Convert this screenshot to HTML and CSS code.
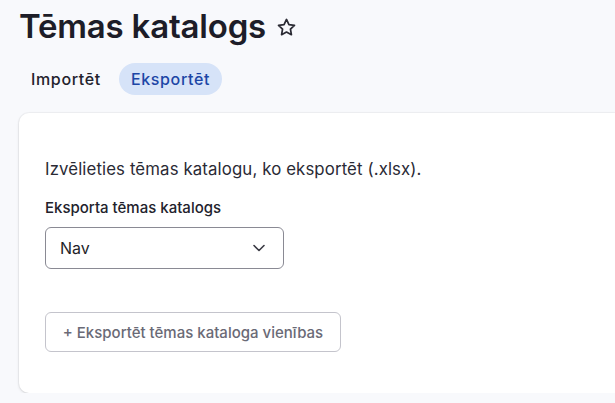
FILE: index.html
```html
<!DOCTYPE html>
<html lang="lv">
<head>
<meta charset="utf-8">
<link rel="stylesheet" href="styles.css">
</head>
<body>
<div class="page">
  <header class="head">
    <h1 class="title">Tēmas katalogs</h1>
    <svg class="star" width="21" height="21" viewBox="0 0 24 24" fill="none" stroke="#2a2a33" stroke-width="2" stroke-linejoin="round"><path d="M12 2.8l2.8 5.8 6.3.9-4.6 4.4 1.1 6.3L12 17.2l-5.6 3 1.1-6.3-4.6-4.4 6.3-.9z"/></svg>
  </header>
  <nav class="tabs">
    <span class="tab">Importēt</span>
    <span class="tab active">Eksportēt</span>
  </nav>
  <section class="card">
    <p class="intro">Izvēlieties tēmas katalogu, ko eksportēt (.xlsx).</p>
    <label class="label">Eksporta tēmas katalogs</label>
    <div class="select">
      <span>Nav</span>
      <svg width="16" height="16" viewBox="0 0 16 16" fill="none" stroke="#3a3a44" stroke-width="1.6" stroke-linecap="round" stroke-linejoin="round"><path d="M3 5.5l5 5 5-5"/></svg>
    </div>
    <button class="btn">+ Eksportēt tēmas kataloga vienības</button>
  </section>
</div>
</body>
</html>
```

FILE: styles.css
```css
html, body {
  margin: 0;
  background: #f8f9fc;
  font-family: Inter, "Noto Sans", sans-serif;
  color: #1f1f2a;
}
.page {
  padding: 6px 0 0 19px;
}
.head {
  display: flex;
  align-items: center;
  gap: 10px;
}
.title {
  margin: 0;
  font-size: 33px;
  font-weight: 600;
  letter-spacing: -0.2px;
  line-height: 40px;
  color: #1d1d28;
}
.star {
  margin-top: 2px;
}
.tabs {
  display: flex;
  gap: 6px;
  margin-top: 17px;
}
.tab {
  font-size: 16px;
  font-weight: 500;
  letter-spacing: 0.65px;
  line-height: 32px;
  padding: 0 12px;
  border-radius: 16px;
  color: #22222c;
}
.active {
  background: #d6e3f8;
  color: #1c46a6;
}
.card {
  margin-top: 18px;
  background: #fff;
  border-radius: 10px 0 0 10px;
  box-shadow: 0 1px 3px rgba(0,0,0,0.12), 0 0 0 1px rgba(0,0,0,0.03);
  padding: 44px 26px 41px;
  display: flex;
  flex-direction: column;
  align-items: flex-start;
}
.intro {
  margin: 0;
  font-size: 16.8px;
  letter-spacing: 0.12px;
  line-height: 24px;
  color: #2a2a35;
}
.label {
  margin-top: 17px;
  font-size: 15px;
  font-weight: 500;
  line-height: 20px;
  color: #22222c;
}
.select {
  margin-top: 9px;
  width: 239px;
  height: 42px;
  box-sizing: border-box;
  border: 1px solid #8a8a94;
  border-radius: 6px;
  display: flex;
  align-items: center;
  justify-content: space-between;
  padding: 0 16px 0 14px;
  font-size: 16px;
  color: #1f1f2a;
}
.btn {
  margin-top: 43px;
  width: 296px;
  height: 40px;
  background: #fff;
  border: 1px solid #c4c4cc;
  border-radius: 6px;
  font-family: Inter, "Noto Sans", sans-serif;
  font-size: 15px;
  font-weight: 500;
  color: #6a6a76;
}
```
